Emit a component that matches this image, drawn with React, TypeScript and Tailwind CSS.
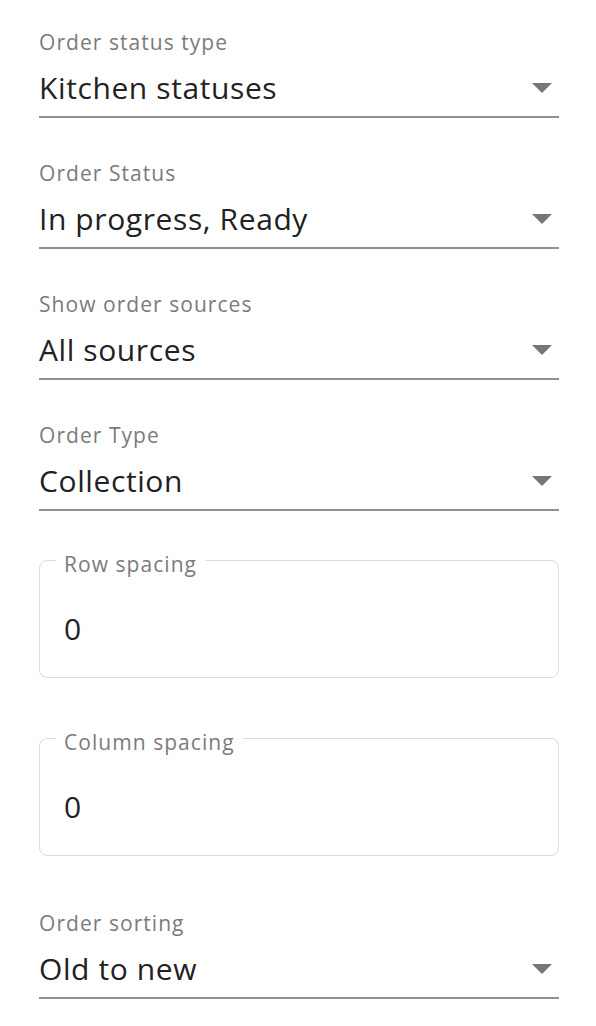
import React from 'react';

function Caret() {
  return (
    <svg width="20" height="10" viewBox="0 0 20 10" className="shrink-0">
      <path d="M0 0h20L10 10z" fill="#767676" />
    </svg>
  );
}

function SelectField({ label, value, className = '' }: { label: string; value: string; className?: string }) {
  return (
    <div className={className}>
      <div className="text-[21px] leading-[24px] tracking-[0.05em] text-[#7b7b7b]">{label}</div>
      <div className="flex items-center justify-between border-b-2 border-[#919191] pr-[7px] pt-[16px] pb-[10px]">
        <span className="text-[30px] leading-[36px] tracking-[0.02em] text-[#222]">{value}</span>
        <Caret />
      </div>
    </div>
  );
}

function OutlinedField({ label, value, className = '' }: { label: string; value: string; className?: string }) {
  return (
    <div className={`relative h-[118px] rounded-[8px] border border-[#dcdcdc] ${className}`}>
      <span className="absolute -top-[9px] left-[16px] bg-white px-[8px] text-[21px] leading-[24px] tracking-[0.05em] text-[#7b7b7b]">
        {label}
      </span>
      <div className="pl-[24px] pt-[50px] text-[30px] leading-[36px] text-[#222]">{value}</div>
    </div>
  );
}

export default function App() {
  return (
    <div className="min-h-[1026px] bg-white px-[39px] pt-[30px]" style={{ fontFamily: '"Open Sans", "Noto Sans", sans-serif' }}>
      <div className="w-[520px]">
        <SelectField label="Order status type" value="Kitchen statuses" />
        <SelectField label="Order Status" value="In progress, Ready" className="mt-[43px]" />
        <SelectField label="Show order sources" value="All sources" className="mt-[43px]" />
        <SelectField label="Order Type" value="Collection" className="mt-[43px]" />
        <OutlinedField label="Row spacing" value="0" className="mt-[49px]" />
        <OutlinedField label="Column spacing" value="0" className="mt-[60px]" />
        <SelectField label="Order sorting" value="Old to new" className="mt-[55px]" />
      </div>
    </div>
  );
}
